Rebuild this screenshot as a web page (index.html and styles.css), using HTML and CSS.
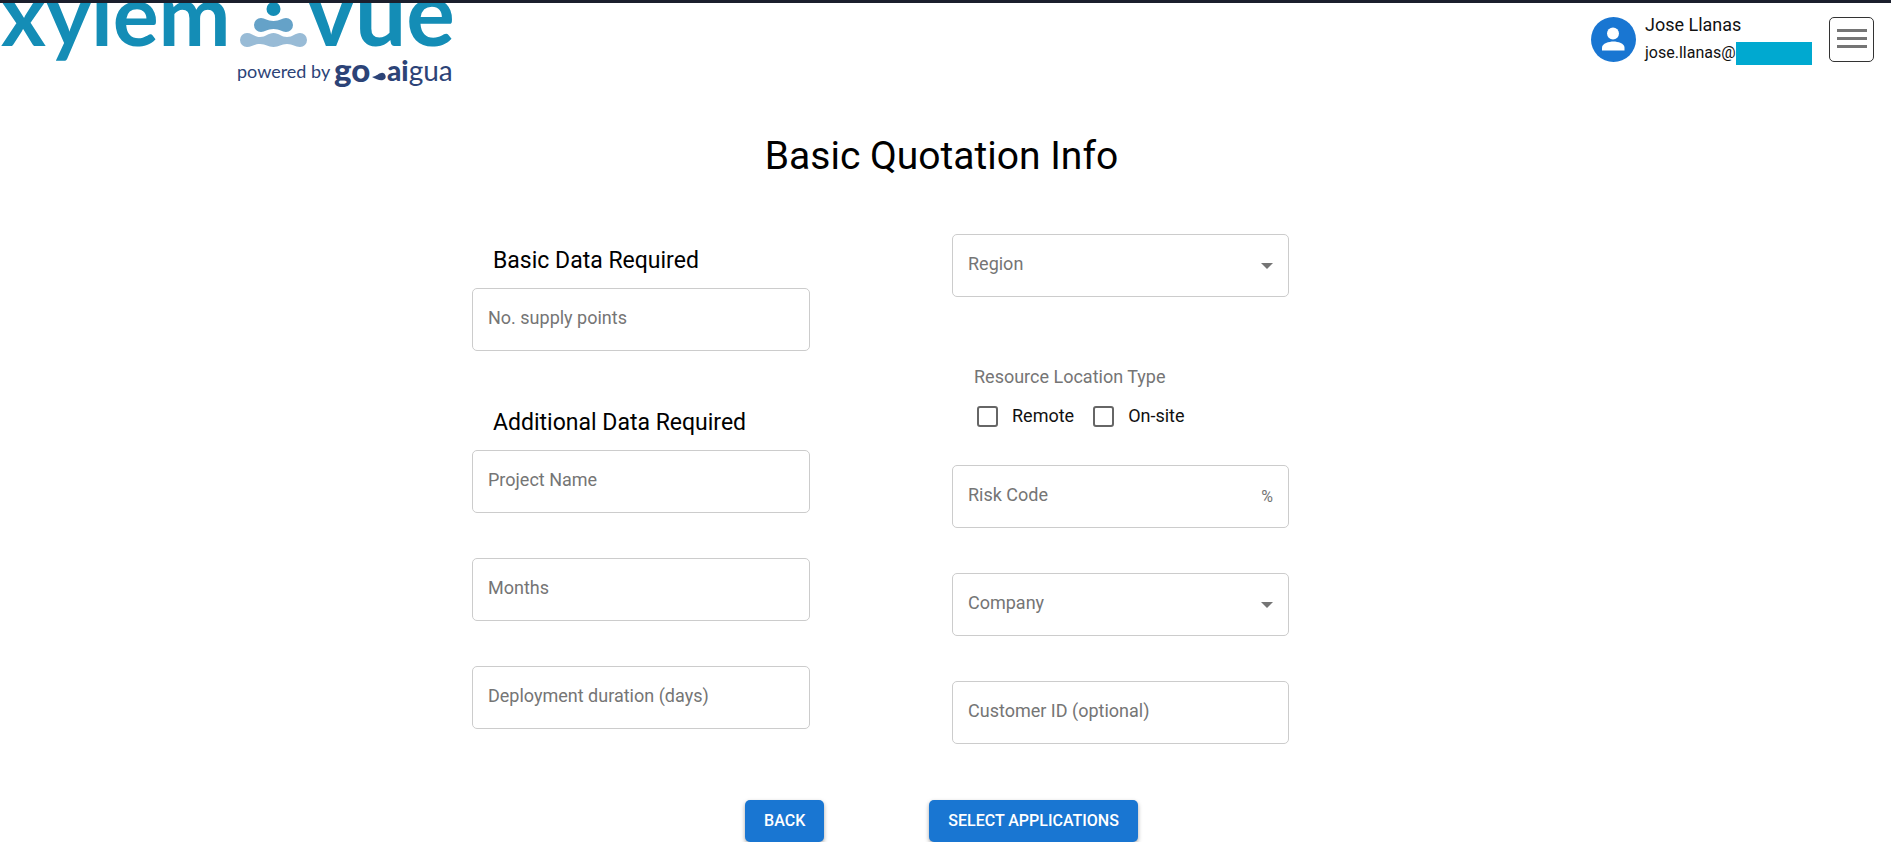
FILE: index.html
```html
<!DOCTYPE html>
<html lang="en">
<head>
<meta charset="utf-8">
<title>Basic Quotation Info</title>
<link rel="stylesheet" href="styles.css">
</head>
<body>
<header class="header">
  <svg class="logo" width="460" height="96" viewBox="0 3 460 96" role="img" aria-label="xylem vue powered by go-aigua">
    <g class="logo-word">
      <text x="1" y="46">xylem</text>
      <text x="307" y="46" class="logo-vue">vue</text>
    </g>
    <circle cx="273.500" cy="9" r="7" fill="#148db6"/>
    <path d="M261 18c4 0 6 3 12.500 3s8.500-3 12.500-3a7 7 0 0 1 0 14c-4 0-6-3-12.500-3s-8.500 3-12.500 3a7 7 0 0 1 0-14z" fill="#65a2c8"/>
    <path d="M247 33c5 0 7 4 13 4s8-4 13.500-4 7.500 4 13.500 4 8-4 13-4a7 7 0 0 1 0 14c-5 0-7-3-13-3s-8 3-13.500 3-7.500-3-13.500-3-8 3-13 3a7 7 0 0 1 0-14z" fill="#98bbd6"/>
    <g class="logo-sub">
      <text x="237" y="78" class="logo-powered">powered by</text>
      <text x="334" y="82" class="logo-go">go</text>
      <path d="M372 77c5-1 7-4 9-4a3.500 3.500 0 0 1 2 7c-3 1-7-1-11-3z"/>
      <text x="387" y="81" class="logo-ai">ai<tspan class="logo-gua">gua</tspan></text>
    </g>
  </svg>
  <div class="account">
    <svg class="avatar" viewBox="0 0 45 45" aria-hidden="true">
      <circle cx="22.500" cy="22.500" r="22.500" fill="#1976d2"/>
      <circle cx="22" cy="16.500" r="6" fill="#fff"/>
      <path d="M11 33.500v-3c0-4 7-6 11.500-6s11 2 11 6v3z" fill="#fff"/>
    </svg>
    <div class="identity">
      <span class="name">Jose Llanas</span>
      <span class="email">jose.llanas@<span class="mask"></span></span>
    </div>
    <button class="menu" type="button" aria-label="Menu"><span></span><span></span><span></span></button>
  </div>
</header>
<main class="page">
  <h1 class="title">Basic Quotation Info</h1>
  <form>
    <div class="columns">
      <div class="column">
        <h2 class="section">Basic Data Required</h2>
        <div class="field"><input type="text" aria-label="No. supply points" placeholder="No. supply points"></div>
        <h2 class="section">Additional Data Required</h2>
        <div class="field"><input type="text" aria-label="Project Name" placeholder="Project Name"></div>
        <div class="field"><input type="text" aria-label="Months" placeholder="Months"></div>
        <div class="field"><input type="text" aria-label="Deployment duration (days)" placeholder="Deployment duration (days)"></div>
      </div>
      <div class="column">
        <div class="field">
          <select aria-label="Region"><option>Region</option></select>
          <svg class="arrow" viewBox="0 0 12 6" aria-hidden="true"><path d="M0 0h12L6 6z"/></svg>
        </div>
        <fieldset class="location">
          <legend>Resource Location Type</legend>
          <div class="choices">
            <label><input type="checkbox">Remote</label>
            <label><input type="checkbox">On-site</label>
          </div>
        </fieldset>
        <div class="field"><input type="text" aria-label="Risk Code" placeholder="Risk Code"><span class="unit">%</span></div>
        <div class="field">
          <select aria-label="Company"><option>Company</option></select>
          <svg class="arrow" viewBox="0 0 12 6" aria-hidden="true"><path d="M0 0h12L6 6z"/></svg>
        </div>
        <div class="field"><input type="text" aria-label="Customer ID (optional)" placeholder="Customer ID (optional)"></div>
      </div>
    </div>
    <div class="actions">
      <button class="action" type="button">BACK</button>
      <button class="action" type="button">SELECT APPLICATIONS</button>
    </div>
  </form>
</main>
</body>
</html>
```
FILE: styles.css
```css
* { box-sizing: border-box; }

body {
  margin: 0;
  border-top: 3px solid #1b1f2d;
  background: #fff;
  color: #111;
  font: 18px/24px Roboto, sans-serif;
}

.header {
  display: flex;
  justify-content: space-between;
  align-items: flex-start;
  height: 123px;
}

.logo { display: block; }
.logo-word { font: 700 86px Lato, sans-serif; fill: #148db6; }
.logo-vue { font-size: 91px; }
.logo-sub { font-family: Lato, sans-serif; fill: #2c4377; }
.logo-powered { font-size: 18px; }
.logo-go { font-size: 33px; font-weight: 900; }
.logo-ai { font-size: 28px; font-weight: 900; }
.logo-gua { font-weight: 400; }

.account { display: flex; padding: 14px 17px 0 0; }
.avatar { width: 45px; height: 45px; margin-right: 9px; }
.identity { display: flex; flex-direction: column; gap: 4px; width: 184px; margin-top: -4px; }
.email { display: flex; align-items: center; font-size: 16px; }
.mask { width: 76px; height: 23px; background: #00a9d0; }

.menu {
  display: flex;
  flex-direction: column;
  justify-content: center;
  align-items: center;
  gap: 5px;
  width: 45px;
  height: 45px;
  padding: 0 0 2px;
  border: 1px solid #333;
  border-radius: 5px;
  background: #fff;
}
.menu span { width: 30px; height: 3px; background: #757575; }

.page { margin-right: 8px; }
.title {
  margin: 0 0 48px;
  text-align: center;
  font-size: 39px;
  line-height: 60px;
  font-weight: 400;
  color: #000;
}

.columns {
  display: grid;
  grid-template-columns: 338px 337px;
  justify-content: center;
  gap: 142px;
  padding-right: 122px;
}

.section {
  margin: 0;
  padding: 9px 0 9px 21px;
  font-size: 23px;
  line-height: 36px;
  font-weight: 400;
  color: #000;
}

.field {
  position: relative;
  display: flex;
  height: 63px;
  margin-bottom: 45px;
  border: 1px solid #ccc;
  border-radius: 5px;
}
.field input, .field select {
  flex: 1;
  min-width: 0;
  padding: 0 15px 4px;
  border: 0;
  background: none;
  appearance: none;
  color: #757575;
  font: inherit;
}
.field input::placeholder { color: #757575; opacity: 1; }
.arrow { position: absolute; right: 15px; top: 28px; width: 12px; height: 6px; fill: #757575; pointer-events: none; }
.unit { align-self: center; padding-right: 15px; font-size: 16px; color: #757575; }

.location { margin: 0; padding: 23px 0 37px 22px; border: 0; min-width: 0; }
.location legend { float: left; width: 100%; padding: 0; color: #757575; }
.choices { clear: both; display: flex; gap: 16px; padding-top: 15px; }
.choices label { display: flex; align-items: center; }
.choices input {
  appearance: none;
  width: 21px;
  height: 21px;
  margin: 0 14px 0 3px;
  border: 2px solid #666;
  border-radius: 3px;
}

.actions { display: flex; justify-content: center; gap: 105px; padding-top: 11px; }
.action {
  height: 42px;
  padding: 0 19px;
  border: 0;
  border-radius: 5px;
  background: #1976d2;
  color: #fff;
  font: 500 16px/24px Roboto, sans-serif;
  box-shadow: 0 2px 4px rgba(0, 0, 0, .35);
}
```
